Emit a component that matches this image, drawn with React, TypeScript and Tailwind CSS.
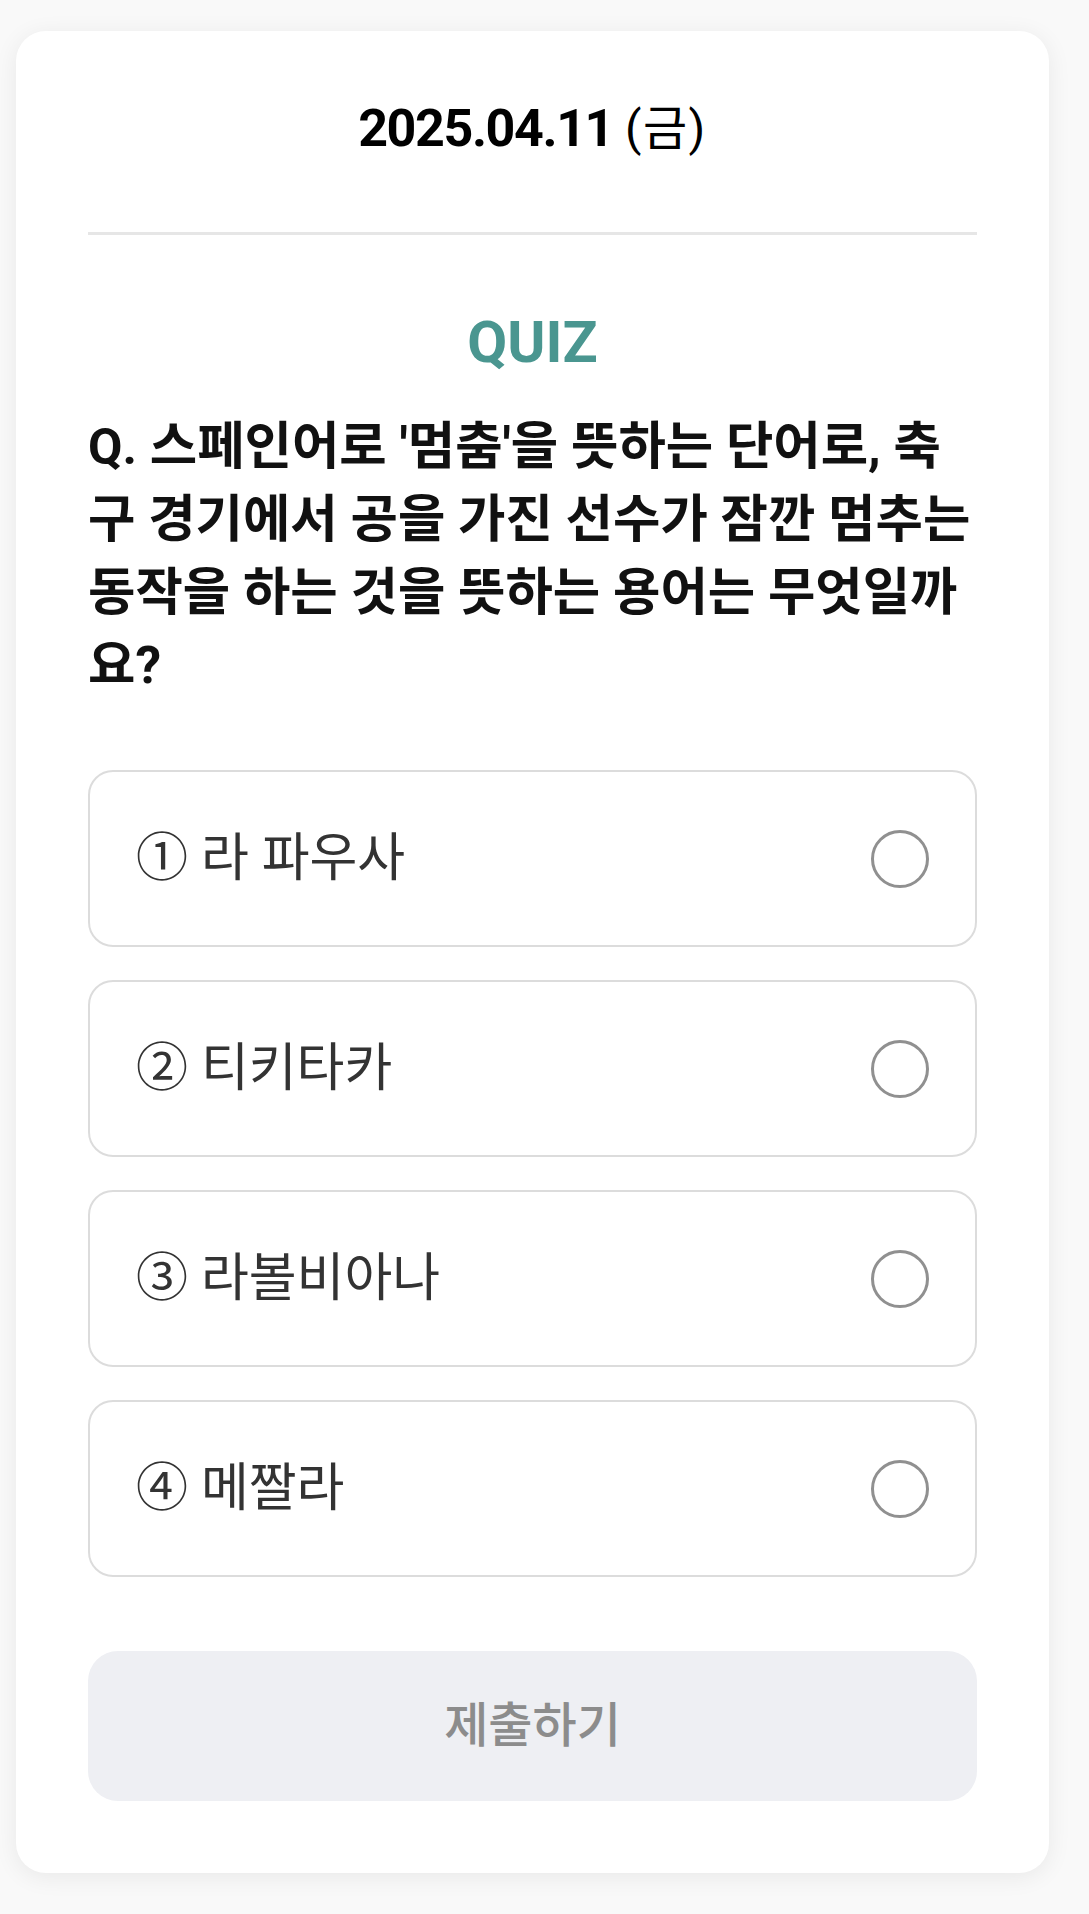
import React from "react";

const FONT = { fontFamily: "Roboto, 'Noto Sans CJK KR', sans-serif" };

const options = ["① 라 파우사", "② 티키타카", "③ 라볼비아나", "④ 메짤라"];

export default function App() {
  return (
    <div className="min-h-[1914px] w-full bg-[#f9f9f9] pt-[31px] pb-[41px]" style={FONT}>
      <div className="ml-[16px] w-[1033px] rounded-[30px] bg-white px-[72px] pt-[72px] pb-[72px] shadow-[0_4px_24px_rgba(0,0,0,0.07)]">
        <div className="flex h-[52px] items-center justify-center text-black">
          <span className="text-[52px] font-bold leading-[52px] tracking-[-1.4px]">2025.04.11</span>
          <span className="ml-[12px] text-[48px] font-normal leading-[52px] tracking-[1.5px]">(금)</span>
        </div>
        <div className="mt-[77px] h-[3px] bg-[#e6e6e6]" />
        <div className="mt-[78px] text-center text-[58px] font-bold leading-[58px] text-[#4a9690]">QUIZ</div>
        <p className="mt-[39px] whitespace-nowrap text-[51.5px] font-bold leading-[73px] text-[#111111]">
          <span className="text-[50px] leading-none">Q.</span> 스페인어로 '멈춤'을 뜻하는 단어로, 축
          <br />
          구 경기에서 공을 가진 선수가 잠깐 멈추는
          <br />
          동작을 하는 것을 뜻하는 용어는 무엇일까
          <br />
          요?
        </p>
        <div className="mt-[68px] flex flex-col gap-[33px]">
          {options.map((o) => (
            <div
              key={o}
              className="flex h-[177px] items-center justify-between rounded-[25px] border-2 border-[#dcdcdc] bg-white px-[46px]"
            >
              <span className="text-[52px] font-normal leading-[60px] text-[#333333]">{o}</span>
              <span className="block h-[58px] w-[58px] rounded-full border-[3px] border-[#909090]" />
            </div>
          ))}
        </div>
        <div className="mt-[74px] flex h-[150px] items-center justify-center rounded-[30px] bg-[#eeeff3]">
          <span className="text-[48px] font-medium text-[#8c8c8c]">제출하기</span>
        </div>
      </div>
    </div>
  );
}
